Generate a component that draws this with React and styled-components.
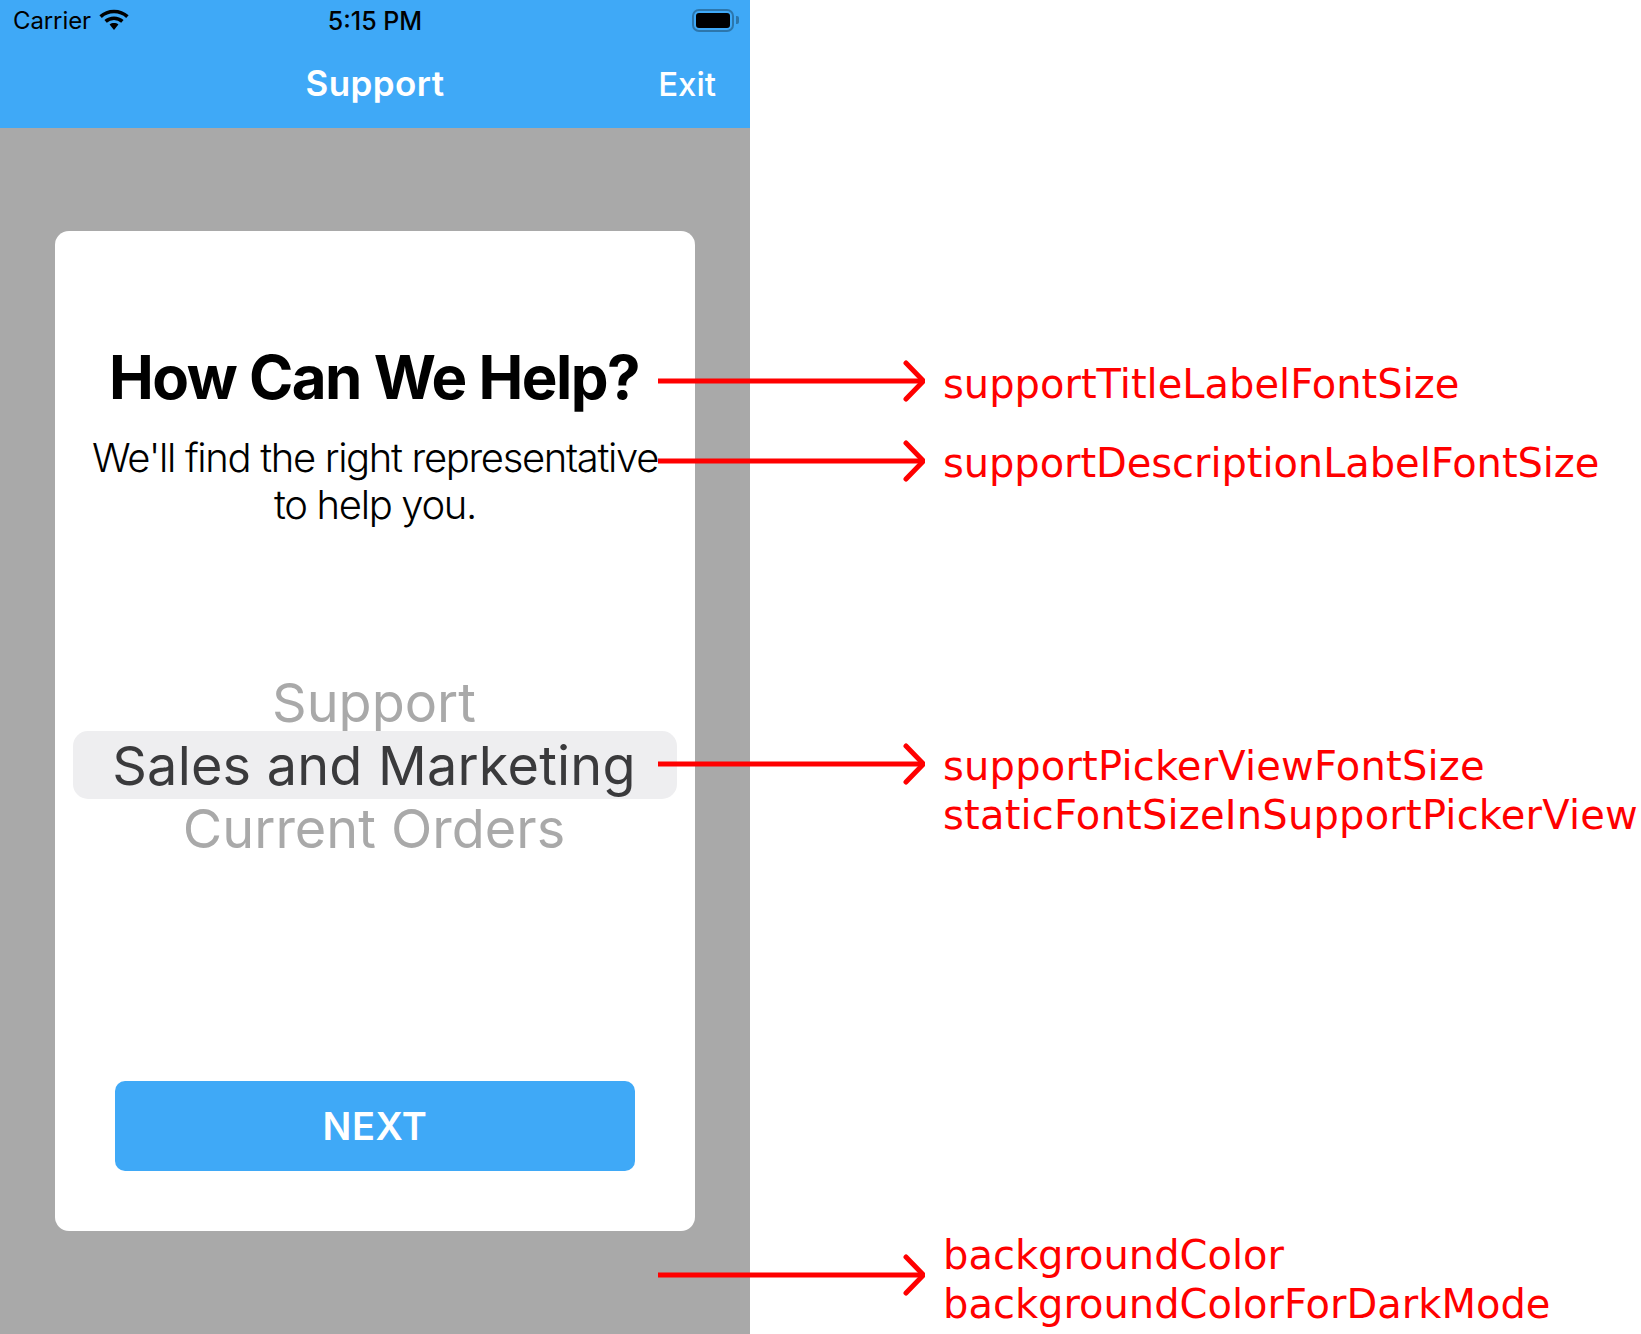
// App.jsx
import React from 'react';
import styled, { createGlobalStyle } from 'styled-components';

const GlobalStyle = createGlobalStyle`
  html, body {
    margin: 0;
    padding: 0;
    background: #ffffff;
  }
`;

const Page = styled.div`
  position: relative;
  width: 1641px;
  height: 1334px;
  overflow: hidden;
  background: #ffffff;
  font-family: Inter, "Liberation Sans", sans-serif;
`;

const Phone = styled.div`
  width: 750px;
  height: 1334px;
  display: flex;
  flex-direction: column;
  background: #a9a9a9;
`;

const Header = styled.header`
  height: 128px;
  flex: none;
  background: #3fa9f7;
  display: flex;
  flex-direction: column;
`;

const StatusBar = styled.div`
  height: 40px;
  padding: 0 11px 0 13px;
  display: grid;
  grid-template-columns: 1fr auto 1fr;
  align-items: center;
  color: #000000;
  font-size: 24px;
`;

const Carrier = styled.div`
  display: flex;
  align-items: center;
  gap: 8px;
`;

const CarrierName = styled.span`
  padding-top: 1px;
  letter-spacing: -0.1px;
`;

const Time = styled.div`
  padding: 2px 2px 0 0;
  font-size: 25px;
  font-weight: 500;
`;

const Battery = styled.div`
  justify-self: end;
  display: flex;
  align-items: center;
  gap: 2px;
`;

const BatteryBody = styled.div`
  width: 42px;
  height: 23px;
  box-sizing: border-box;
  padding: 2px;
  border: 2px solid #2c76ac;
  border-radius: 7px;
`;

const BatteryFill = styled.div`
  height: 100%;
  background: #000000;
  border-radius: 3px;
`;

const BatteryCap = styled.div`
  width: 3px;
  height: 8px;
  background: #2c76ac;
  border-radius: 0 2px 2px 0;
`;

const NavBar = styled.div`
  flex: 1;
  padding: 0 34px 2px;
  display: grid;
  grid-template-columns: 1fr auto 1fr;
  align-items: center;
  color: #ffffff;
`;

const NavTitle = styled.div`
  grid-column: 2;
  font-size: 35px;
  font-weight: 600;
  letter-spacing: 0.4px;
`;

const NavAction = styled.div`
  justify-self: end;
  padding-top: 1px;
  font-size: 33px;
  font-weight: 500;
`;

const Content = styled.main`
  flex: 1;
  display: flex;
  align-items: center;
  justify-content: center;
`;

const Card = styled.section`
  width: 640px;
  height: 1000px;
  box-sizing: border-box;
  padding: 111px 18px 60px;
  display: flex;
  flex-direction: column;
  background: #ffffff;
  border-radius: 14px;
`;

const Title = styled.h1`
  margin: 0;
  padding-right: 2px;
  font-size: 60px;
  line-height: 70px;
  font-weight: 700;
  letter-spacing: -1.5px;
  color: #000000;
  text-align: center;
  white-space: nowrap;
`;

const Description = styled.p`
  margin: 22px 0 143px;
  font-size: 40px;
  line-height: 47px;
  font-weight: 300;
  letter-spacing: -1.35px;
  color: #000000;
  text-align: center;
  white-space: nowrap;
`;

const Picker = styled.div`
  display: flex;
  flex-direction: column;
`;

const PickerRow = styled.div`
  height: ${(p) => (p.$selected ? '68px' : '63px')};
  margin: ${(p) => (p.$selected ? '-3px 0 -2px' : '0')};
  padding-right: 2px;
  line-height: ${(p) => (p.$selected ? '70px' : '63px')};
  font-size: 54px;
  letter-spacing: ${(p) => (p.$selected ? '0.2px' : '0')};
  text-align: center;
  color: ${(p) => (p.$selected ? '#3a3a3c' : '#a9a9a9')};
  background: ${(p) => (p.$selected ? '#eeeef0' : 'transparent')};
  border-radius: 15px;
`;

const NextButton = styled.button`
  margin: auto 42px 0;
  height: 90px;
  flex: none;
  padding: 0;
  border: none;
  border-radius: 10px;
  background: #3fa9f7;
  color: #ffffff;
  font-family: inherit;
  font-size: 38px;
  font-weight: 600;
  letter-spacing: 0.5px;
`;

const Callout = styled.div`
  position: absolute;
  left: 658px;
  top: ${(p) => p.$top}px;
  display: flex;
  align-items: flex-start;
  gap: 18px;
`;

const ArrowSvg = styled.svg`
  flex: none;
  width: 267px;
  height: 46px;
  margin-top: ${(p) => p.$offset}px;
`;

const CalloutText = styled.div`
  font-family: "DejaVu Sans", sans-serif;
  font-size: 40px;
  line-height: 49px;
  letter-spacing: ${(p) => p.$spacing}px;
  color: #ff0000;
  white-space: nowrap;
`;

const Arrow = ({ offset }) => (
  <ArrowSvg $offset={offset} viewBox="0 0 267 46" fill="none" stroke="#ff0000">
    <path d="M0 23H265" strokeWidth="5" />
    <path d="M248 5L265.5 23L248 41" strokeWidth="5" strokeLinecap="round" strokeLinejoin="round" />
  </ArrowSvg>
);

const WifiIcon = () => (
  <svg width="30" height="22" viewBox="0 0 30 22" fill="none" stroke="#000000" strokeWidth="3.6">
    <path d="M1.6 7.6C9 .8 21 .8 28.4 7.6" />
    <path d="M6.6 12.4C11.4 8.2 18.6 8.2 23.4 12.4" />
    <path d="M10.6 15.4C13 13.6 17 13.6 19.4 15.4L15 21Z" fill="#000000" stroke="none" />
  </svg>
);

const callouts = [
  { top: 360, offset: -2, spacing: 0, lines: ['supportTitleLabelFontSize'] },
  { top: 439, offset: -1, spacing: -0.07, lines: ['supportDescriptionLabelFontSize'] },
  { top: 742, offset: -1, spacing: 0.2, lines: ['supportPickerViewFontSize', 'staticFontSizeInSupportPickerView'] },
  { top: 1231, offset: 21, spacing: 0, lines: ['backgroundColor', 'backgroundColorForDarkMode'] },
];

const App = () => {
  return (
    <Page>
      <GlobalStyle />
      <Phone>
        <Header>
          <StatusBar>
            <Carrier>
              <CarrierName>Carrier</CarrierName>
              <WifiIcon />
            </Carrier>
            <Time>5:15 PM</Time>
            <Battery>
              <BatteryBody>
                <BatteryFill />
              </BatteryBody>
              <BatteryCap />
            </Battery>
          </StatusBar>
          <NavBar>
            <NavTitle>Support</NavTitle>
            <NavAction>Exit</NavAction>
          </NavBar>
        </Header>
        <Content>
          <Card>
            <Title>How Can We Help?</Title>
            <Description>
              We'll find the right representative
              <br />
              to help you.
            </Description>
            <Picker>
              <PickerRow>Support</PickerRow>
              <PickerRow $selected>Sales and Marketing</PickerRow>
              <PickerRow>Current Orders</PickerRow>
            </Picker>
            <NextButton>NEXT</NextButton>
          </Card>
        </Content>
      </Phone>
      {callouts.map((c) => (
        <Callout key={c.lines[0]} $top={c.top}>
          <Arrow offset={c.offset} />
          <CalloutText $spacing={c.spacing}>
            {c.lines.map((line) => (
              <div key={line}>{line}</div>
            ))}
          </CalloutText>
        </Callout>
      ))}
    </Page>
  );
};

export default App;
